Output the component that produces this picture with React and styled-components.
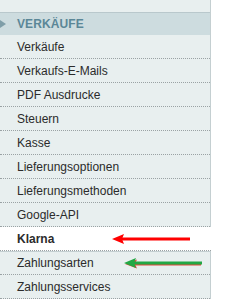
import styled, { createGlobalStyle } from "styled-components"

const GlobalStyle = createGlobalStyle`
    html, body {
        margin: 0;
        padding: 0;
        background: #ffffff;
        font-family: "Liberation Sans", Arial, sans-serif;
    }
`

const Pagina = styled.div`
    width: 230px;
    height: 300px;
    overflow: hidden;
    background: #ffffff;
`

const Painel = styled.div`
    width: 210px;
    background: #e8efef;
    border-right: 1px solid #c4cfd1;
    padding-top: 12px;
    display: flex;
    flex-direction: column;
`

const Cabecalho = styled.div`
    display: flex;
    align-items: center;
    gap: 11px;
    height: 22px;
    border-top: 1px solid #b9c8cc;
    background: #cddcdf;
    font-size: 12px;
    font-weight: 700;
    color: #5b8797;
    letter-spacing: 0.1px;
`

const Seta = styled.span`
    width: 0;
    height: 0;
    border-top: 4px solid transparent;
    border-bottom: 4px solid transparent;
    border-left: 6px solid #7f9ea8;
`

const Item = styled.div`
    position: relative;
    display: flex;
    align-items: center;
    padding-left: 17px;
    font-size: 12px;
    color: #2b2b2b;
    border-bottom: 1px dotted #9aa2a4;
    background: ${({ $ativo }) => ($ativo ? "#ffffff" : "transparent")};
    font-weight: ${({ $ativo }) => ($ativo ? 700 : 400)};
    margin-right: ${({ $ativo }) => ($ativo ? "-1px" : "0")};
    border-top: ${({ $topo }) => ($topo ? "1px solid #c4cfd1" : "none")};
    height: ${({ $topo }) => ($topo ? "22px" : "23px")};
`

const Flecha = styled.svg`
    position: absolute;
    left: ${({ $x }) => $x}px;
    top: 50%;
    transform: translateY(-50%);
`

const itens = [
    "Verkäufe",
    "Verkaufs-E-Mails",
    "PDF Ausdrucke",
    "Steuern",
    "Kasse",
    "Lieferungsoptionen",
    "Lieferungsmethoden",
    "Google-API",
    "Klarna",
    "Zahlungsarten",
    "Zahlungsservices",
]

const FlechaVermelha = () => (
    <Flecha $x={110} width="82" height="14" viewBox="0 0 82 14">
        <path d="M12 5.5 L80 5.5 L80 8.5 L12 8.5 Z" fill="#ff0000" />
        <path d="M2 7 L14 2 L12 7 L14 12 Z" fill="#ff0000" />
    </Flecha>
)

const FlechaVerde = () => (
    <Flecha $x={122} width="82" height="14" viewBox="0 0 82 14">
        <path d="M13 7 L79 7 L79 9.5 L13 9.5 Z" fill="#e04a3c" />
        <path d="M3 8 L15 3.5 L13 8 L15 12.5 Z" fill="#e04a3c" />
        <path d="M12 5.5 L80 5.5 L80 8.5 L12 8.5 Z" fill="#22a844" />
        <path d="M2 7 L14 2 L12 7 L14 12 Z" fill="#22a844" />
    </Flecha>
)

const App = () => {
    return (
        <Pagina>
            <GlobalStyle />
            <Painel>
                <Cabecalho>
                    <Seta />
                    VERKÄUFE
                </Cabecalho>
                {itens.map((nome) => (
                    <Item key={nome} $ativo={nome === "Klarna"} $topo={nome === "Zahlungsarten"}>
                        {nome}
                        {nome === "Klarna" && <FlechaVermelha />}
                        {nome === "Zahlungsarten" && <FlechaVerde />}
                    </Item>
                ))}
            </Painel>
        </Pagina>
    )
}

export default App
